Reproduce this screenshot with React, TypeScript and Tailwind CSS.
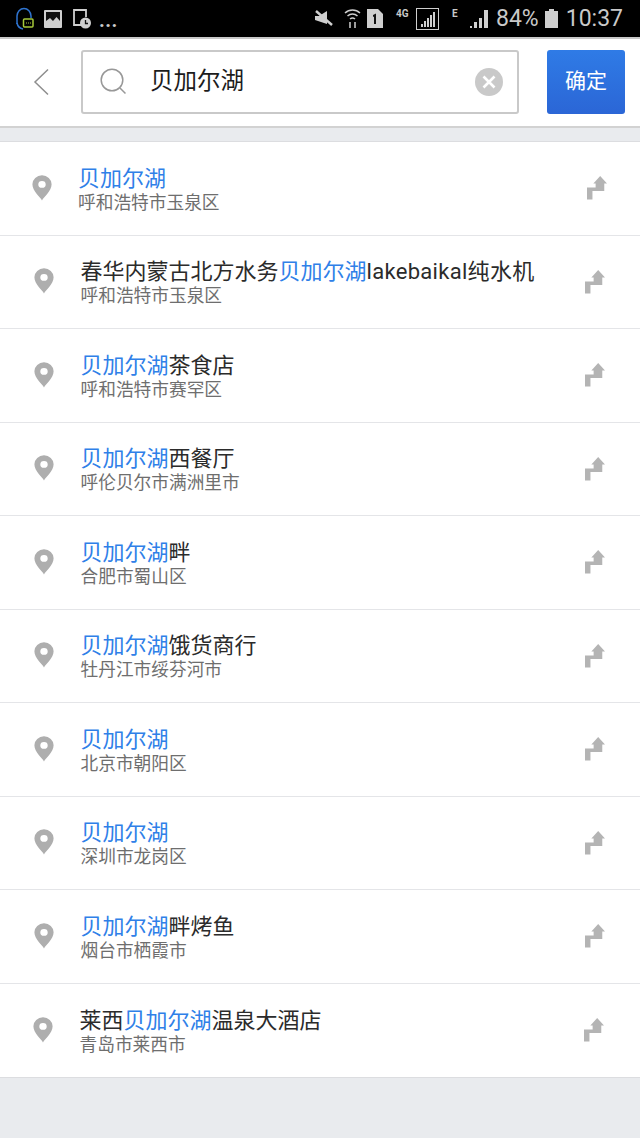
import React from "react";

const places = [
  { id: 1, before: "", after: "", sub: "呼和浩特市玉泉区", pin: "ml-[32px]", text: "ml-[26px]", turn: "mr-[33px]" },
  { id: 2, before: "春华内蒙古北方水务", after: "lakebaikal纯水机", sub: "呼和浩特市玉泉区", pin: "ml-[34px]", text: "ml-[26.500px]", turn: "mr-[35px]" },
  { id: 3, before: "", after: "茶食店", sub: "呼和浩特市赛罕区", pin: "ml-[34px]", text: "ml-[26.500px]", turn: "mr-[35px]" },
  { id: 4, before: "", after: "西餐厅", sub: "呼伦贝尔市满洲里市", pin: "ml-[34px]", text: "ml-[26.500px]", turn: "mr-[35px]" },
  { id: 5, before: "", after: "畔", sub: "合肥市蜀山区", pin: "ml-[34px]", text: "ml-[26.500px]", turn: "mr-[35px]" },
  { id: 6, before: "", after: "饿货商行", sub: "牡丹江市绥芬河市", pin: "ml-[34px]", text: "ml-[26.500px]", turn: "mr-[35px]" },
  { id: 7, before: "", after: "", sub: "北京市朝阳区", pin: "ml-[34px]", text: "ml-[26.500px]", turn: "mr-[35px]" },
  { id: 8, before: "", after: "", sub: "深圳市龙岗区", pin: "ml-[34px]", text: "ml-[26.500px]", turn: "mr-[35px]" },
  { id: 9, before: "", after: "畔烤鱼", sub: "烟台市栖霞市", pin: "ml-[34px]", text: "ml-[26.500px]", turn: "mr-[35px]" },
  { id: 10, before: "莱西", after: "温泉大酒店", sub: "青岛市莱西市", pin: "ml-[33px]", text: "ml-[26.500px]", turn: "mr-[36px]" },
];

const PinIcon = ({ className }: { className: string }) => (
  <svg className={className} width="20" height="26" viewBox="0 0 20 28" preserveAspectRatio="none">
    <path
      fillRule="evenodd"
      fill="#aeaeae"
      d="M10 27.5 C8.4 23.6 .4 17.6 .4 10 A9.6 9.6 0 0 1 19.6 10 C19.6 17.6 11.6 23.6 10 27.5 Z M10 6.4 A3.7 3.7 0 1 0 10 13.8 A3.7 3.7 0 1 0 10 6.4 Z"
    />
  </svg>
);

const TurnIcon = ({ className }: { className: string }) => (
  <svg className={className} width="20" height="24" viewBox="0 0 22 24" preserveAspectRatio="none">
    <path fill="#b4b4b4" d="M0 23.5 V11.5 H9.5 V7.5 H7 L14.5 0 L22 7.5 H19 V15 H6 V23.5 Z" />
  </svg>
);

const StatusBar = () => (
  <div className="flex h-[37px] items-center justify-between bg-black pl-[15px] pr-[17px] text-[#c9c9c9]">
    <div className="flex items-center">
      <svg width="19" height="24" viewBox="0 0 19 24" fill="none">
        <path d="M2 17 V9 A7 7.500 0 0 1 16 9 V11" stroke="#2f74d0" strokeWidth="1.500" />
        <path d="M2 16 Q3 21 8 22" stroke="#2f74d0" strokeWidth="1.500" />
        <rect x="8.500" y="12" width="9.500" height="8" rx="1" stroke="#a7c93a" strokeWidth="1.500" />
        <path d="M11 16 H16" stroke="#a7c93a" strokeWidth="1" strokeDasharray="1 1" />
      </svg>
      <svg className="ml-[10px]" width="18" height="18" viewBox="0 0 18 18">
        <rect width="18" height="18" rx="1" fill="#cfcfcf" />
        <rect x="2" y="2" width="14" height="14" fill="#111" />
        <path d="M2 16 V11 L6 8 L9 11 L12.500 7 L16 11 V16 Z" fill="#cfcfcf" />
      </svg>
      <svg className="ml-[11px]" width="18" height="20" viewBox="0 0 18 20" fill="none">
        <path d="M8 16 H1 V1 H13 V8" stroke="#cfcfcf" strokeWidth="1.800" />
        <circle cx="12.500" cy="14" r="5.500" fill="#cfcfcf" />
        <path d="M12.500 11 V14.500 H15" stroke="#111" strokeWidth="1.300" />
      </svg>
      <span className="ml-[8px] mt-[3px] text-[20px] font-bold leading-none tracking-[0.5px]">...</span>
    </div>
    <div className="flex items-center">
      <svg width="19" height="18" viewBox="0 0 19 18" fill="none">
        <path d="M2 1 L18 15" stroke="#cfcfcf" strokeWidth="2.400" />
        <path d="M1 6 H5 L13 1 V14 L1 10 Z" fill="#cfcfcf" />
      </svg>
      <svg className="ml-[11px]" width="17" height="21" viewBox="0 0 17 21" fill="none" stroke="#cfcfcf" strokeWidth="1.500">
        <path d="M1 5 A11 11 0 0 1 16 5" />
        <path d="M3.500 8 A7.500 7.500 0 0 1 13.500 8" />
        <path d="M6 11 A4 4 0 0 1 11 11" />
        <path d="M6 14 V20 M11 14 V20" />
      </svg>
      <svg className="ml-[6px]" width="16" height="19" viewBox="0 0 16 19">
        <path d="M0 0 H11 L16 5 V19 H0 Z" fill="#cfcfcf" />
        <path d="M6 6 L9 4.500 V15 H7 V7.500 L6 8 Z" fill="#111" />
      </svg>
      <span className="ml-[13px] mb-[9px] w-[15px] text-[10px] font-bold leading-none">4G</span>
      <svg className="ml-[5px]" width="23" height="22" viewBox="0 0 23 22">
        <rect x=".5" y=".5" width="22" height="21" fill="none" stroke="#cfcfcf" />
        <path d="M5 16 h2 v3 h-2 Z M8 13 h2 v6 h-2 Z M11 10 h2 v9 h-2 Z M14 7 h2 v12 h-2 Z M17 4 h2 v15 h-2 Z" fill="#cfcfcf" />
      </svg>
      <span className="ml-[13px] mb-[9px] w-[6px] text-[10px] font-bold leading-none">E</span>
      <svg className="ml-[12px]" width="18" height="19" viewBox="0 0 18 19">
        <path d="M0 17 h2 v2 h-2 Z M4 13 h3 v6 h-3 Z M9 9 h3 v10 h-3 Z M14 1 h4 v18 h-4 Z" fill="#cfcfcf" />
      </svg>
      <span className="ml-[8px] text-[23px] leading-none">84%</span>
      <svg className="ml-[6px]" width="13" height="19" viewBox="0 0 13 19">
        <path d="M4 0 H9 V2 H13 V19 H0 V2 H4 Z" fill="#cfcfcf" />
      </svg>
      <span className="ml-[8px] text-[23px] leading-none">10:37</span>
    </div>
  </div>
);

const SearchHeader = () => (
  <div className="flex h-[91px] items-center border-y-2 border-t-[#c9c9c9] border-b-[#d2d2d2] bg-white pb-[2px]">
    <svg className="ml-[33px]" width="17" height="28" viewBox="0 0 17 28" fill="none">
      <path d="M15 1.500 L2 14 L15 26.500" stroke="#8e8e8e" strokeWidth="1.500" />
    </svg>
    <div className="ml-[31px] flex h-[64px] w-[438px] items-center rounded-[3px] border-2 border-[#c9c9c9]">
      <svg className="ml-[17px]" width="27" height="27" viewBox="0 0 27 27" fill="none">
        <circle cx="12" cy="12" r="10.800" stroke="#989898" strokeWidth="1.500" />
        <path d="M20 20 L25.500 25.500" stroke="#989898" strokeWidth="1.500" />
      </svg>
      <span className="ml-[23px] text-[23.500px] leading-none text-[#1c1c1c]">贝加尔湖</span>
      <span className="ml-auto mr-[14px] flex h-[28px] w-[28px] items-center justify-center rounded-full bg-[#c9c9c9]">
        <svg width="14" height="14" viewBox="0 0 14 14" fill="none">
          <path d="M1.500 1.500 L12.500 12.500 M12.500 1.500 L1.500 12.500" stroke="#fff" strokeWidth="2.600" />
        </svg>
      </span>
    </div>
    <button className="ml-[28px] flex h-[64px] w-[78px] items-center justify-center rounded-[3px] bg-gradient-to-b from-[#2f7be6] to-[#2b66d6] text-[21px] text-white">
      确定
    </button>
  </div>
);

const App = () => {
  return (
    <div className="flex h-[1138px] w-[640px] flex-col overflow-hidden bg-[#e9ebee] font-['Roboto','Noto_Sans_CJK_SC',sans-serif]">
      <StatusBar />
      <SearchHeader />
      <div className="mt-[13px] border-y border-[#dcdde0] bg-white">
        {places.map((place) => (
          <div
            key={place.id}
            className="flex h-[93.5px] items-center border-b border-[#e4e5e8] last:border-b-0"
          >
            <PinIcon className={`${place.pin} mt-[-1px] shrink-0`} />
            <div className={`${place.text} flex min-w-0 flex-col pt-[4px]`}>
              <div className="text-[22px] leading-[26px] text-[#2b2b2b]">
                {place.before}
                <span className="text-[#2f80e8]">贝加尔湖</span>
                {place.id === 2 ? <span className="tracking-[0.3px]">{place.after}</span> : place.after}
              </div>
              <div className="text-[17.700px] leading-[23px] text-[#6e6e6e]">{place.sub}</div>
            </div>
            <TurnIcon className={`${place.turn} ml-auto shrink-0`} />
          </div>
        ))}
      </div>
    </div>
  );
};

export default App;
